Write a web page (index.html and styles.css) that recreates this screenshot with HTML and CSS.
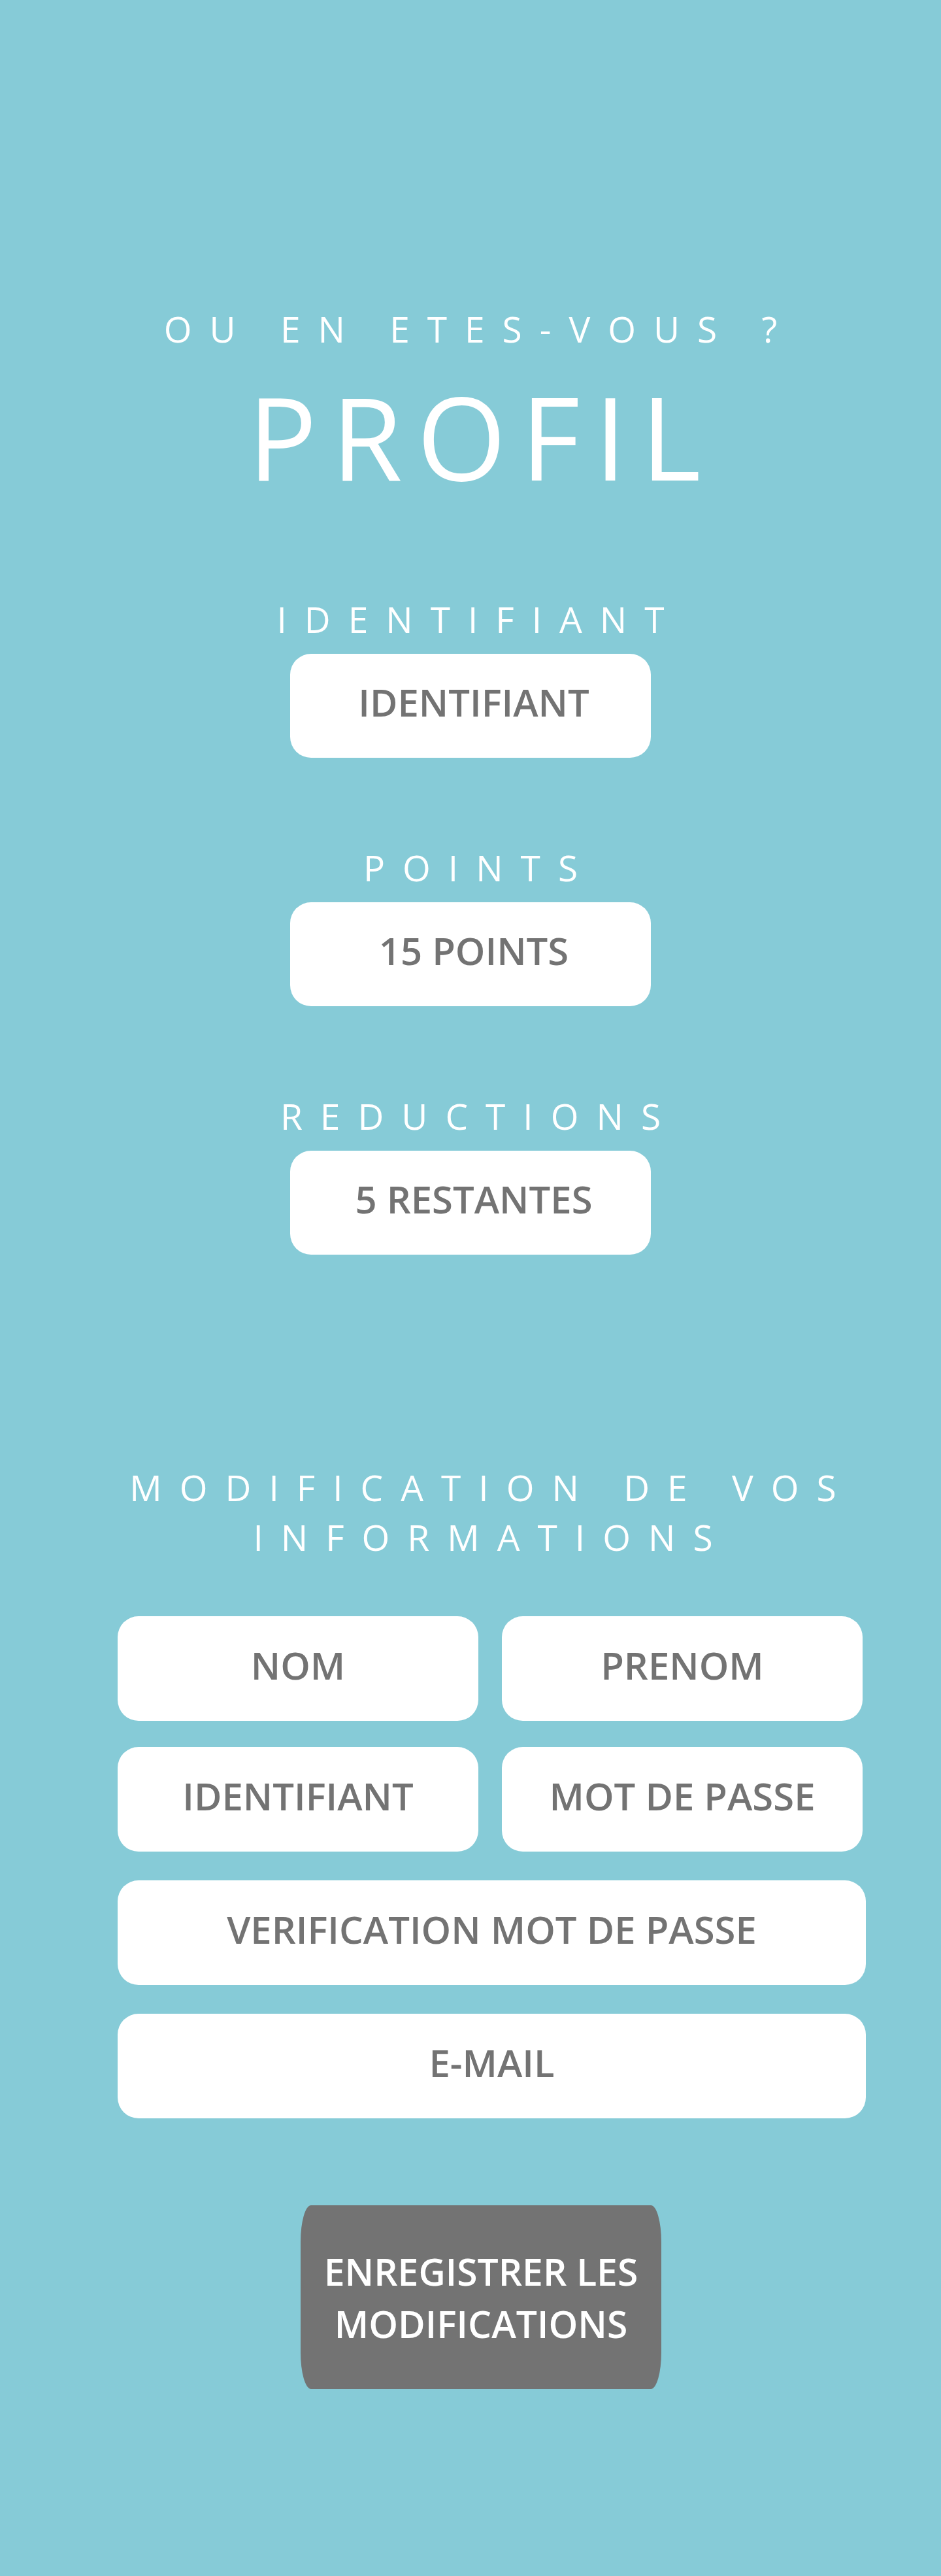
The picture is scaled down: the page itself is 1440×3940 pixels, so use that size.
FILE: index.html
```html
<!DOCTYPE html>
<html lang="fr">
<head>
<meta charset="utf-8">
<title>Profil</title>
<link rel="stylesheet" href="styles.css">
</head>
<body>
<main class="page">
  <section class="hero">
    <p class="subtitle">OU EN ETES-VOUS ?</p>
    <h1 class="title">PROFIL</h1>
  </section>

  <section class="stats">
    <div class="stat">
      <p class="label">IDENTIFIANT</p>
      <div class="stat-box">IDENTIFIANT</div>
    </div>
    <div class="stat">
      <p class="label">POINTS</p>
      <div class="stat-box">15 POINTS</div>
    </div>
    <div class="stat">
      <p class="label">REDUCTIONS</p>
      <div class="stat-box">5 RESTANTES</div>
    </div>
  </section>

  <section class="edit">
    <h2 class="edit-heading"><span class="heading-line">MODIFICATION DE VOS</span><span class="heading-line">INFORMATIONS</span></h2>
    <div class="field-grid">
      <div class="field">NOM</div>
      <div class="field">PRENOM</div>
      <div class="field">IDENTIFIANT</div>
      <div class="field">MOT DE PASSE</div>
    </div>
    <div class="field field-wide">VERIFICATION MOT DE PASSE</div>
    <div class="field field-wide">E-MAIL</div>
  </section>

  <div class="actions">
    <button class="save-btn" type="button">ENREGISTRER LES MODIFICATIONS</button>
  </div>
</main>
</body>
</html>
```

FILE: styles.css
```css
* {
  box-sizing: border-box;
}

html, body {
  margin: 0;
  padding: 0;
}

body {
  background: #86cbd7;
  font-family: "Open Sans", "Noto Sans", "DejaVu Sans", sans-serif;
}

.page {
  min-height: 3940px;
  padding-top: 470px;
  display: flex;
  flex-direction: column;
}

.hero {
  display: flex;
  flex-direction: column;
  align-items: center;
}

.subtitle,
.label,
.edit-heading {
  margin: 0;
  color: #ffffff;
  font-size: 55px;
  font-weight: 400;
  letter-spacing: 27px;
  line-height: 66px;
  text-align: center;
}

.subtitle,
.label {
  padding-left: 27px;
}

.title {
  margin: 43px 0 0;
  color: #ffffff;
  font-size: 176px;
  font-weight: 400;
  letter-spacing: 22px;
  line-height: 176px;
  padding-left: 34px;
  text-align: center;
}

.stats {
  margin-top: 159px;
  display: flex;
  flex-direction: column;
  align-items: center;
  gap: 135px;
}

.stat {
  display: flex;
  flex-direction: column;
  align-items: center;
}

.stat-box {
  margin-top: 20px;
  width: 552px;
  height: 159px;
  background: #ffffff;
  border-radius: 32px;
  display: flex;
  align-items: center;
  justify-content: center;
  padding: 0 0 12px 10px;
  color: #737373;
  font-size: 58px;
  font-weight: 600;
}

.edit {
  margin-top: 318px;
  margin-left: 180px;
  width: 1145px;
  display: flex;
  flex-direction: column;
}

.edit-heading {
  line-height: 76px;
  display: flex;
  flex-direction: column;
  align-items: center;
}

.heading-line {
  white-space: nowrap;
  letter-spacing: 27px;
}

.field-grid {
  margin-top: 83px;
  display: grid;
  grid-template-columns: 552px 552px;
  column-gap: 36px;
  row-gap: 40px;
}

.field {
  height: 160px;
  background: #ffffff;
  border-radius: 32px;
  display: flex;
  align-items: center;
  justify-content: center;
  padding-bottom: 12px;
  color: #737373;
  font-size: 58px;
  font-weight: 600;
}

.field-wide {
  margin-top: 44px;
  width: 1145px;
}

.actions {
  margin-top: 133px;
  display: flex;
  justify-content: center;
  padding-left: 32px;
}

.save-btn {
  width: 552px;
  height: 281px;
  border: 0;
  background: #737373;
  border-radius: 16px / 56px;
  color: #ffffff;
  font-family: inherit;
  font-size: 57px;
  font-weight: 600;
  line-height: 80px;
  padding: 0 16px;
  text-align: center;
}
```
